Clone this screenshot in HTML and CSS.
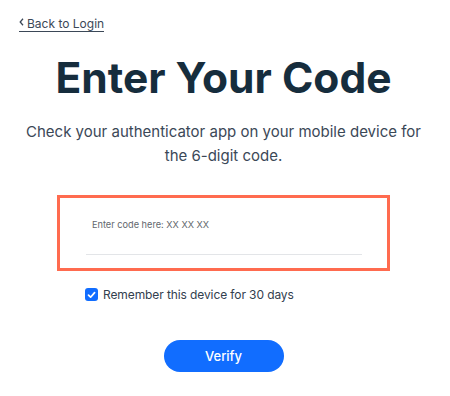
FILE: index.html
```html
<!DOCTYPE html>
<html lang="en">
<head>
<meta charset="utf-8">
<link rel="stylesheet" href="styles.css">
</head>
<body>
<div class="page">
  <a class="back" href="#"><svg class="chev" width="5" height="8" viewBox="0 0 5 8"><path d="M4 0.8 L1.2 4 L4 7.2" fill="none" stroke="#3b4857" stroke-width="1.3"/></svg><span>Back to Login</span></a>
  <main class="main">
    <h1 class="title">Enter Your Code</h1>
    <p class="sub">Check your authenticator app on your mobile device for the 6-digit code.</p>
    <div class="box">
      <div class="field">
        <span class="label">Enter code here: XX XX XX</span>
      </div>
    </div>
    <label class="remember">
      <span class="check"><svg width="9" height="8" viewBox="0 0 9 8"><path d="M1.5 4.2 L3.6 6.2 L7.6 1.6" fill="none" stroke="#fff" stroke-width="1.7" stroke-linecap="round" stroke-linejoin="round"/></svg></span>
      <span>Remember this device for 30 days</span>
    </label>
    <button class="verify">Verify</button>
  </main>
</div>
</body>
</html>
```
FILE: styles.css
```css
html, body { margin: 0; padding: 0; background: #fff; }
body { font-family: Inter, "Noto Sans", sans-serif; color: #162d3d; }
.page { width: 450px; height: 396px; box-sizing: border-box; padding: 10px 0 0 0; }
.back { display: inline-flex; align-items: center; gap: 3px; margin-left: 19px; color: #3b4857; text-decoration: none; font-size: 12px; line-height: 15px; border-bottom: 1px solid #3b4857; }
.chev { display: block; margin-top: -2px; }
.main { display: flex; flex-direction: column; align-items: center; padding-right: 3px; }
.title { margin: 21px 0 0 0; font-size: 42.5px; font-weight: 700; line-height: 50px; letter-spacing: 0; color: #162d3d; }
.sub { margin: 17px 0 0 0; width: 420px; text-align: center; font-size: 15px; line-height: 24px; color: #3b4857; }
.box { margin-top: 27px; width: 333px; height: 76px; box-sizing: border-box; border: 3px solid #ff6b4f; padding: 14px 25px 0 26px; }
.field { height: 43px; border-bottom: 1px solid #e3e5e8; padding-left: 6px; box-sizing: border-box; }
.label { font-size: 9.2px; line-height: 14px; color: #62676d; }
.remember { align-self: flex-start; margin: 16px 0 0 85px; display: flex; align-items: center; gap: 5px; font-size: 12px; line-height: 16px; letter-spacing: -0.1px; color: #32404e; }
.check { width: 13px; height: 13px; border-radius: 3px; background: #116dff; display: flex; align-items: center; justify-content: center; }
.verify { margin-top: 37px; width: 120px; height: 32px; border: none; border-radius: 16px; background: #116dff; color: #fff; font-family: Inter, "Noto Sans", sans-serif; font-size: 13px; font-weight: 500; }
```
